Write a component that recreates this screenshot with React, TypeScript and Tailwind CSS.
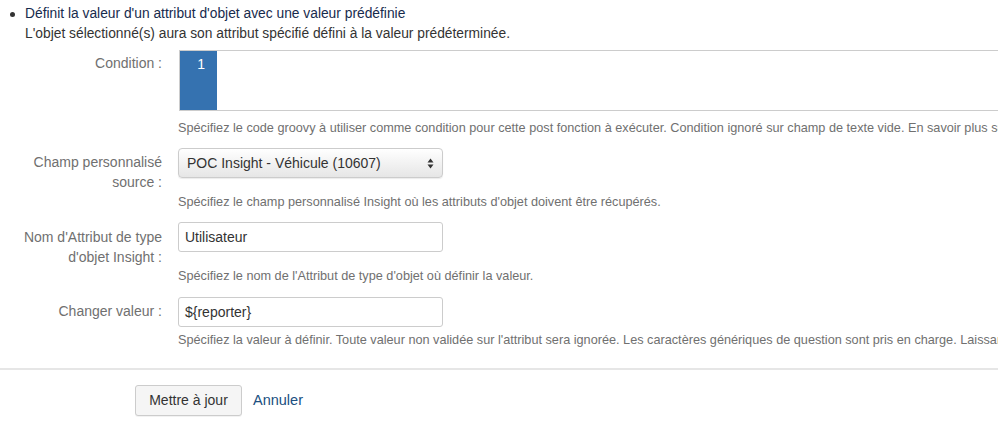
import React from 'react';

const Label = ({ children, pt }: { children: React.ReactNode; pt: string }) => (
  <div className={`w-[140px] shrink-0 text-right text-[14px] leading-[20px] text-[#707070] ${pt}`}>
    {children}
  </div>
);

const Help = ({ children, mt }: { children: React.ReactNode; mt: string }) => (
  <div className={`ml-[178px] overflow-hidden whitespace-nowrap text-[12.7px] leading-[16px] text-[#707070] ${mt}`}>
    {children}
  </div>
);

const TextInput = ({ value }: { value: string }) => (
  <div className="h-[30px] w-[265px] rounded-[3px] border border-[#cccccc] bg-white px-[6px] text-[14px] leading-[28px] text-[#333333]">
    {value}
  </div>
);

export default function App() {
  return (
    <div className="h-[445px] w-[998px] overflow-hidden bg-white font-['Liberation_Sans',Arial,sans-serif]">
      <div className="flex pt-[4px]">
        <div className="w-[25px] shrink-0 pl-[10px] pt-[8px]">
          <div className="h-[5px] w-[5px] rounded-full bg-[#333333]" />
        </div>
        <div className="text-[13.8px] leading-[20px]">
          <div className="text-[#172b4d]">Définit la valeur d'un attribut d'objet avec une valeur prédéfinie</div>
          <div className="text-[#333333]">L'objet sélectionné(s) aura son attribut spécifié défini à la valeur prédéterminée.</div>
        </div>
      </div>

      {/* Condition */}
      <div className="mt-[6px] flex gap-[17px] pl-[22px]">
        <Label pt="pt-[3px]">Condition :</Label>
        <div className="flex h-[61px] flex-1 border border-r-0 border-[#cccccc] shadow-[inset_0_1px_2px_rgba(0,0,0,0.1)]">
          <div className="w-[37px] shrink-0 bg-[#3572b0] pr-[12px] pt-[3px] text-right text-[14px] leading-[20px] text-white">
            1
          </div>
          <div className="flex-1 bg-white" />
        </div>
      </div>
      <Help mt="mt-[9px]">
        Spécifiez le code groovy à utiliser comme condition pour cette post fonction à exécuter. Condition ignoré sur champ de texte vide. En savoir plus sur les conditions
      </Help>

      {/* Champ personnalisé source */}
      <div className="mt-[12px] flex gap-[16px] pl-[22px]">
        <Label pt="pt-[4px]">
          Champ personnalisé
          <br />
          source :
        </Label>
        <div className="flex h-[30px] w-[265px] items-center justify-between rounded-[4px] border border-[#cccccc] bg-gradient-to-b from-[#ffffff] to-[#e6e6e6] pl-[8px] pr-[8px] text-[14px] text-[#333333] shadow-[0_1px_1px_rgba(0,0,0,0.08)]">
          <span>POC Insight - Véhicule (10607)</span>
          <svg width="7" height="11" viewBox="0 0 7 11">
            <path d="M3.5 0.5 L6.5 4.5 L0.5 4.5 Z" fill="#333333" />
            <path d="M3.5 10.5 L6.5 6.5 L0.5 6.5 Z" fill="#333333" />
          </svg>
        </div>
      </div>
      <Help mt="mt-[2px]">
        Spécifiez le champ personnalisé Insight où les attributs d'objet doivent être récupérés.
      </Help>

      {/* Nom d'Attribut */}
      <div className="mt-[12px] flex gap-[16px] pl-[22px]">
        <Label pt="pt-[5px]">
          Nom d'Attribut de type
          <br />
          d'objet Insight :
        </Label>
        <TextInput value="Utilisateur" />
      </div>
      <Help mt="mt-[1px]">Spécifiez le nom de l'Attribut de type d'objet où définir la valeur.</Help>

      {/* Changer valeur */}
      <div className="mt-[13px] flex gap-[16px] pl-[22px]">
        <Label pt="pt-[4px]">Changer valeur :</Label>
        <TextInput value="${reporter}" />
      </div>
      <Help mt="mt-[5px]">
        Spécifiez la valeur à définir. Toute valeur non validée sur l'attribut sera ignorée. Les caractères génériques de question sont pris en charge. Laissant le champ vide
      </Help>

      <div className="mt-[20px] h-[2px] w-full bg-[#e6e6e6]" />

      <div className="mt-[15px] flex items-center gap-[11px] pl-[135px]">
        <button className="h-[31px] w-[107px] rounded-[3px] border border-[#cccccc] bg-[#f5f5f5] text-[14px] text-[#333333] shadow-[0_1px_0_rgba(0,0,0,0.05)]">
          Mettre à jour
        </button>
        <span className="text-[14.5px] text-[#205081]">Annuler</span>
      </div>
    </div>
  );
}
